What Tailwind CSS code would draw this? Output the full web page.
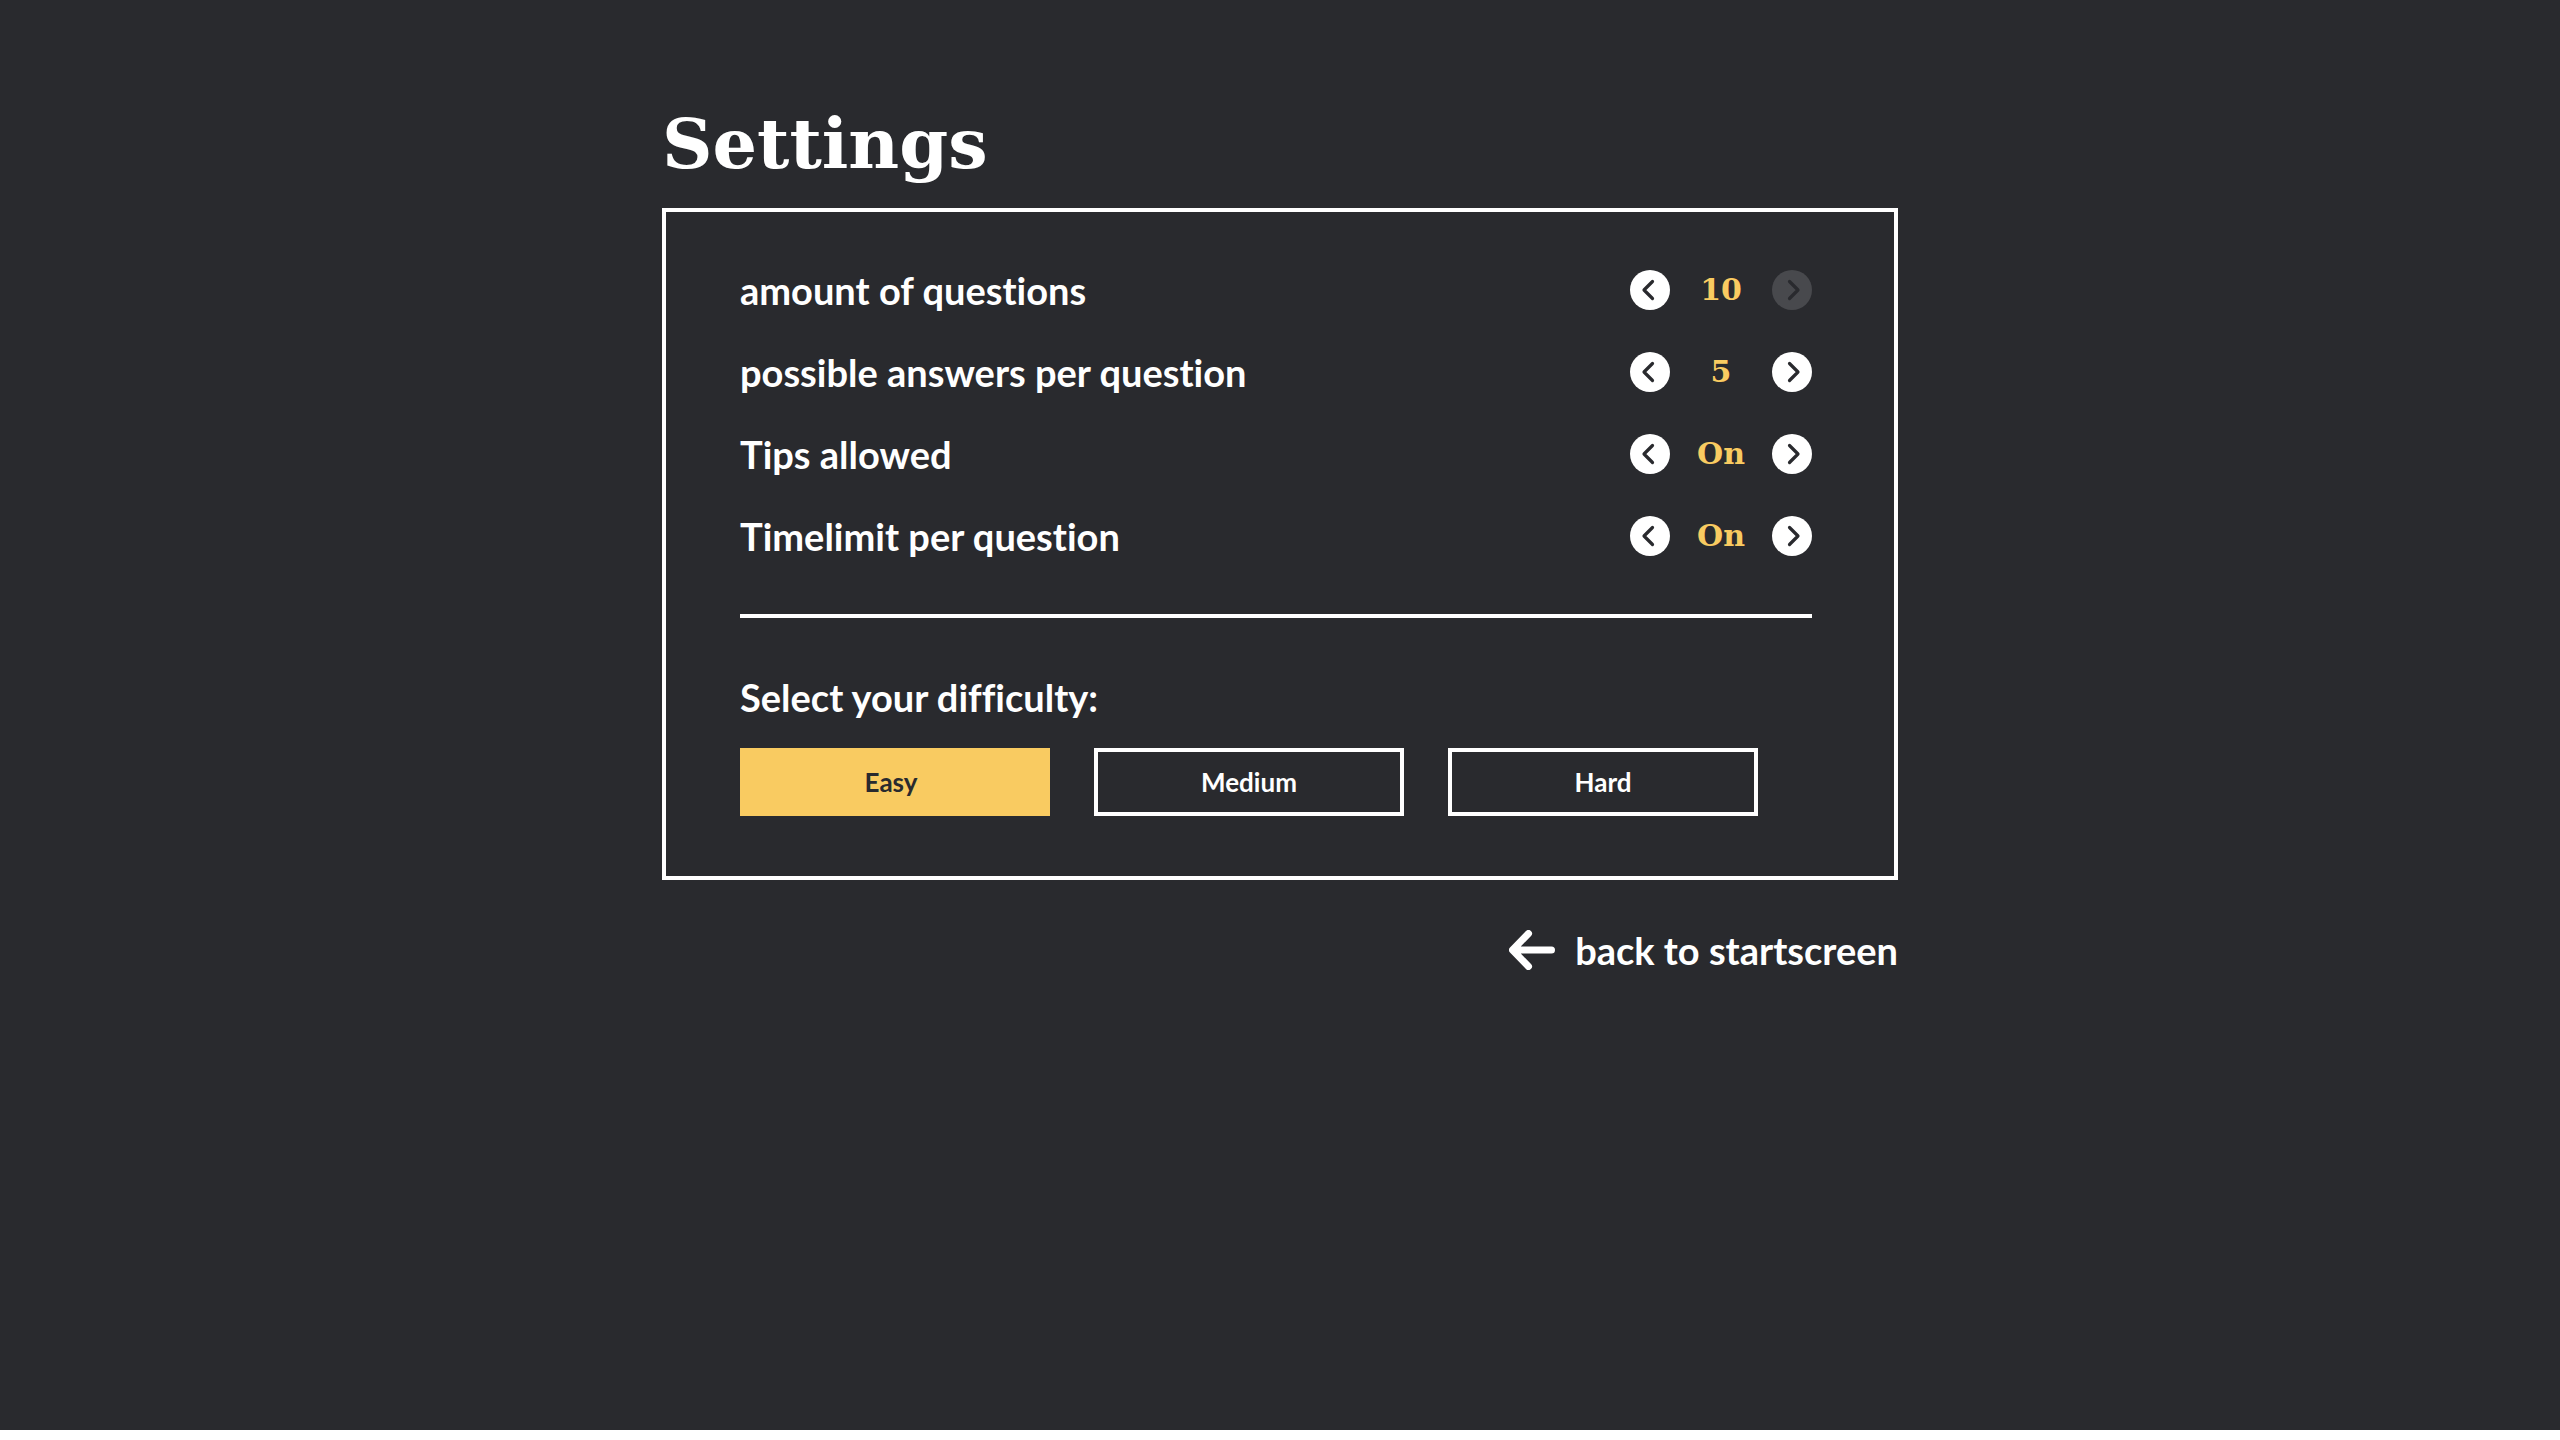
<!DOCTYPE html>
<html lang="en">
<head>
<meta charset="utf-8">
<meta name="viewport" content="width=device-width, initial-scale=1">
<title>Settings</title>
<script src="https://cdn.jsdelivr.net/npm/@tailwindcss/browser@4"></script>
</head>
<body class="bg-white font-['Lato',sans-serif] font-bold text-white [font-variant-ligatures:no-common-ligatures]">
<svg class="hidden" aria-hidden="true">
  <symbol id="left" viewBox="0 0 40 40"><path d="M22.5 11.5 14 20l8.500 8.500" fill="none" stroke="#292a2e" stroke-width="3.200" stroke-linecap="round" stroke-linejoin="round"/></symbol>
  <symbol id="right" viewBox="0 0 40 40"><path d="M17.500 11.500 26 20l-8.500 8.500" fill="none" stroke="#292a2e" stroke-width="3.200" stroke-linecap="round" stroke-linejoin="round"/></symbol>
</svg>
<div class="min-h-[calc(100vh-10px)] bg-[#292a2e] px-6 pt-24">
  <main class="mx-auto max-w-[1236px]">
    <h1 class="font-['DejaVu_Serif',serif] text-[70px] leading-24">Settings</h1>
    <section class="mt-4 border-4 border-white pt-[53px] pr-[82px] pb-15 pl-[74px]">
      <div class="flex flex-col gap-8 text-[38px] leading-[50px]">
        <div class="flex h-[50px] items-center justify-between" role="group" aria-labelledby="l1">
          <span id="l1">amount of questions</span>
          <div class="flex items-center">
            <button class="size-10 rounded-full bg-white" aria-label="Decrease"><svg class="size-10"><use href="#left"/></svg></button>
            <output class="w-[102px] text-center font-['DejaVu_Serif',serif] text-[30px] text-[#f9cb61]">10</output>
            <button class="size-10 rounded-full bg-[#48494d]" aria-label="Increase" disabled><svg class="size-10"><use href="#right"/></svg></button>
          </div>
        </div>
        <div class="flex h-[50px] items-center justify-between" role="group" aria-labelledby="l2">
          <span id="l2">possible answers per question</span>
          <div class="flex items-center">
            <button class="size-10 rounded-full bg-white" aria-label="Decrease"><svg class="size-10"><use href="#left"/></svg></button>
            <output class="w-[102px] text-center font-['DejaVu_Serif',serif] text-[30px] text-[#f9cb61]">5</output>
            <button class="size-10 rounded-full bg-white" aria-label="Increase"><svg class="size-10"><use href="#right"/></svg></button>
          </div>
        </div>
        <div class="flex h-[50px] items-center justify-between" role="group" aria-labelledby="l3">
          <span id="l3">Tips allowed</span>
          <div class="flex items-center">
            <button class="size-10 rounded-full bg-white" aria-label="Previous"><svg class="size-10"><use href="#left"/></svg></button>
            <output class="w-[102px] text-center font-['DejaVu_Serif',serif] text-[30px] text-[#f9cb61]">On</output>
            <button class="size-10 rounded-full bg-white" aria-label="Next"><svg class="size-10"><use href="#right"/></svg></button>
          </div>
        </div>
        <div class="flex h-[50px] items-center justify-between" role="group" aria-labelledby="l4">
          <span id="l4">Timelimit per question</span>
          <div class="flex items-center">
            <button class="size-10 rounded-full bg-white" aria-label="Previous"><svg class="size-10"><use href="#left"/></svg></button>
            <output class="w-[102px] text-center font-['DejaVu_Serif',serif] text-[30px] text-[#f9cb61]">On</output>
            <button class="size-10 rounded-full bg-white" aria-label="Next"><svg class="size-10"><use href="#right"/></svg></button>
          </div>
        </div>
      </div>
      <hr class="mt-[53px] border-t-4 border-white">
      <h2 class="mt-[54px] text-[38px] leading-[50px]" id="difficulty">Select your difficulty:</h2>
      <div class="mt-[26px] flex flex-wrap gap-11 text-[26px] leading-[60px]" role="group" aria-labelledby="difficulty">
        <button class="w-[310px] border-4 border-[#f9cb61] bg-[#f9cb61] pr-2 text-[#292a2e]" aria-pressed="true">Easy</button>
        <button class="w-[310px] border-4 border-white" aria-pressed="false">Medium</button>
        <button class="w-[310px] border-4 border-white" aria-pressed="false">Hard</button>
      </div>
    </section>
    <a href="#" class="mt-[45px] ml-auto flex w-fit items-center gap-5 text-[38px] leading-[50px]">
      <svg class="h-10 w-[46px]" viewBox="0 0 46 40" fill="none" stroke="currentColor" stroke-width="7" stroke-linecap="round" stroke-linejoin="round" aria-hidden="true"><path d="M19.500 3.500 3.500 20l16 16.500M4 20h38.500"/></svg>
      back to startscreen
    </a>
  </main>
</div>
</body>
</html>
